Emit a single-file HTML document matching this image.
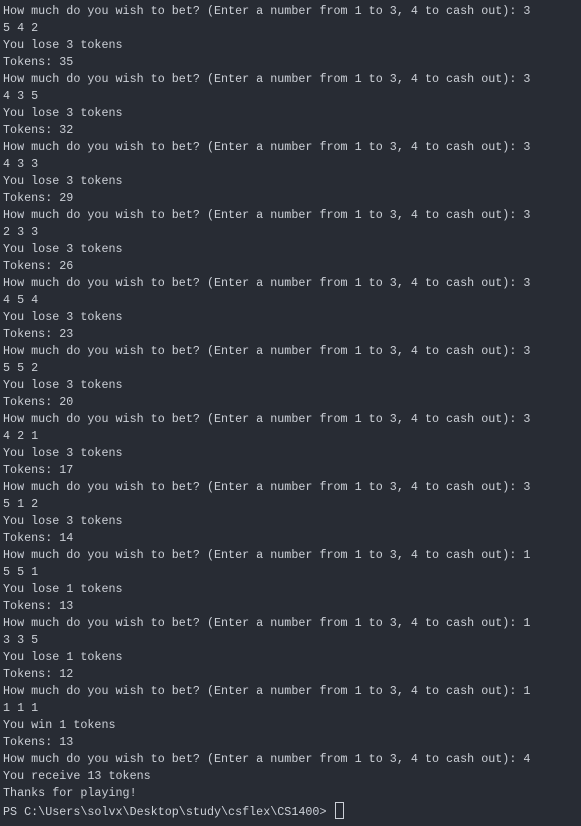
<!DOCTYPE html>
<html><head><style>
html,body{margin:0;padding:0;background:#282c34;width:581px;height:826px;overflow:hidden}
pre{margin:0;position:absolute;left:3px;top:3px;font-family:"Liberation Mono",monospace;font-size:11.72px;line-height:17px;color:#ccd0d7;white-space:pre}
.cur{display:inline-block;width:7px;height:15px;border:1px solid #ccd0d7;vertical-align:-4px;margin-left:1px}
</style></head><body><pre>How much do you wish to bet? (Enter a number from 1 to 3, 4 to cash out): 3
5 4 2
You lose 3 tokens
Tokens: 35
How much do you wish to bet? (Enter a number from 1 to 3, 4 to cash out): 3
4 3 5
You lose 3 tokens
Tokens: 32
How much do you wish to bet? (Enter a number from 1 to 3, 4 to cash out): 3
4 3 3
You lose 3 tokens
Tokens: 29
How much do you wish to bet? (Enter a number from 1 to 3, 4 to cash out): 3
2 3 3
You lose 3 tokens
Tokens: 26
How much do you wish to bet? (Enter a number from 1 to 3, 4 to cash out): 3
4 5 4
You lose 3 tokens
Tokens: 23
How much do you wish to bet? (Enter a number from 1 to 3, 4 to cash out): 3
5 5 2
You lose 3 tokens
Tokens: 20
How much do you wish to bet? (Enter a number from 1 to 3, 4 to cash out): 3
4 2 1
You lose 3 tokens
Tokens: 17
How much do you wish to bet? (Enter a number from 1 to 3, 4 to cash out): 3
5 1 2
You lose 3 tokens
Tokens: 14
How much do you wish to bet? (Enter a number from 1 to 3, 4 to cash out): 1
5 5 1
You lose 1 tokens
Tokens: 13
How much do you wish to bet? (Enter a number from 1 to 3, 4 to cash out): 1
3 3 5
You lose 1 tokens
Tokens: 12
How much do you wish to bet? (Enter a number from 1 to 3, 4 to cash out): 1
1 1 1
You win 1 tokens
Tokens: 13
How much do you wish to bet? (Enter a number from 1 to 3, 4 to cash out): 4
You receive 13 tokens
Thanks for playing!
PS C:\Users\solvx\Desktop\study\csflex\CS1400&gt; <span class="cur"></span></pre></body></html>
